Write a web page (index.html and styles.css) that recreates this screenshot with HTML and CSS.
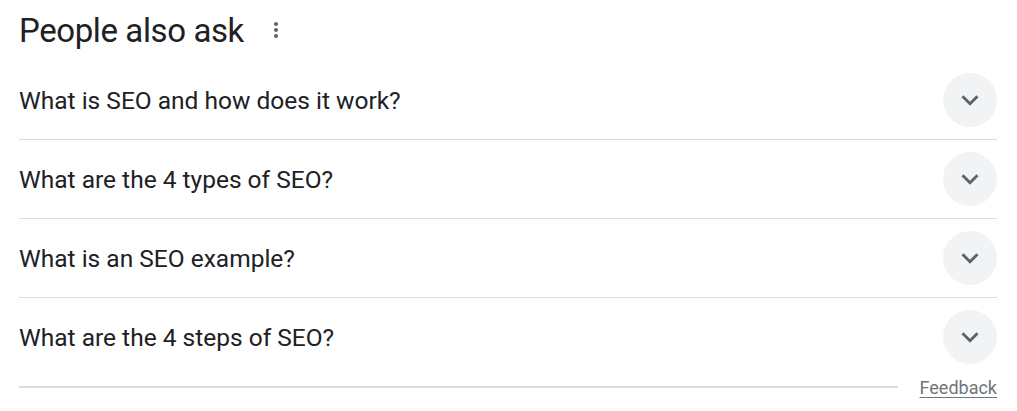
FILE: index.html
```html
<!DOCTYPE html>
<html lang="en">
<head>
  <meta charset="UTF-8">
  <title>People also ask</title>
  <link rel="stylesheet" href="styles.css">
</head>
<body>
  <div class="paa">
    <div class="paa-head">
      <h2>People also ask</h2>
      <span class="more">
        <svg width="24" height="24" viewBox="0 0 24 24"><path fill="#5f6368" d="M12 8c1.1 0 2-.9 2-2s-.9-2-2-2-2 .9-2 2 .9 2 2 2zm0 2c-1.1 0-2 .9-2 2s.9 2 2 2 2-.9 2-2-.9-2-2-2zm0 6c-1.1 0-2 .9-2 2s.9 2 2 2 2-.9 2-2-.9-2-2-2z"/></svg>
      </span>
    </div>

    <div class="q">
      <span class="q-text">What is SEO and how does it work?</span>
      <span class="chev"><svg width="34" height="34" viewBox="0 0 24 24"><path fill="#5f6368" d="M7.41 8.59 12 13.17l4.59-4.58L18 10l-6 6-6-6z"/></svg></span>
    </div>
    <div class="q">
      <span class="q-text">What are the 4 types of SEO?</span>
      <span class="chev"><svg width="34" height="34" viewBox="0 0 24 24"><path fill="#5f6368" d="M7.41 8.59 12 13.17l4.59-4.58L18 10l-6 6-6-6z"/></svg></span>
    </div>
    <div class="q">
      <span class="q-text">What is an SEO example?</span>
      <span class="chev"><svg width="34" height="34" viewBox="0 0 24 24"><path fill="#5f6368" d="M7.41 8.59 12 13.17l4.59-4.58L18 10l-6 6-6-6z"/></svg></span>
    </div>
    <div class="q last">
      <span class="q-text">What are the 4 steps of SEO?</span>
      <span class="chev"><svg width="34" height="34" viewBox="0 0 24 24"><path fill="#5f6368" d="M7.41 8.59 12 13.17l4.59-4.58L18 10l-6 6-6-6z"/></svg></span>
    </div>

    <div class="paa-foot">
      <div class="rule"></div>
      <a href="#" class="feedback">Feedback</a>
    </div>
  </div>
</body>
</html>
```

FILE: styles.css
```css
body {
  margin: 0;
  background: #fff;
  font-family: Roboto, Arial, sans-serif;
  color: #202124;
}
.paa {
  width: 978px;
  margin-left: 19px;
}
.paa-head {
  display: flex;
  align-items: center;
  height: 60px;
  padding-bottom: 1px;
}
.paa-head h2 {
  margin: 0;
  font-size: 33px;
  font-weight: 400;
  letter-spacing: -0.4px;
}
.more {
  display: flex;
  margin-left: 20px;
}
.q {
  display: flex;
  align-items: center;
  justify-content: space-between;
  height: 78px;
  border-bottom: 1px solid #dadce0;
}
.q.last {
  border-bottom: none;
}
.q-text {
  font-size: 24.5px;
}
.chev {
  width: 54px;
  height: 54px;
  border-radius: 50%;
  background: #f1f3f4;
  display: flex;
  align-items: center;
  justify-content: center;
}
.paa-foot {
  display: flex;
  align-items: center;
  height: 22px;
}
.rule {
  flex: 1;
  border-top: 2px solid #dadce0;
  margin-right: 22px;
}
.feedback {
  color: #70757a;
  font-size: 18px;
  text-decoration: underline;
  text-underline-offset: 3px;
}
```
